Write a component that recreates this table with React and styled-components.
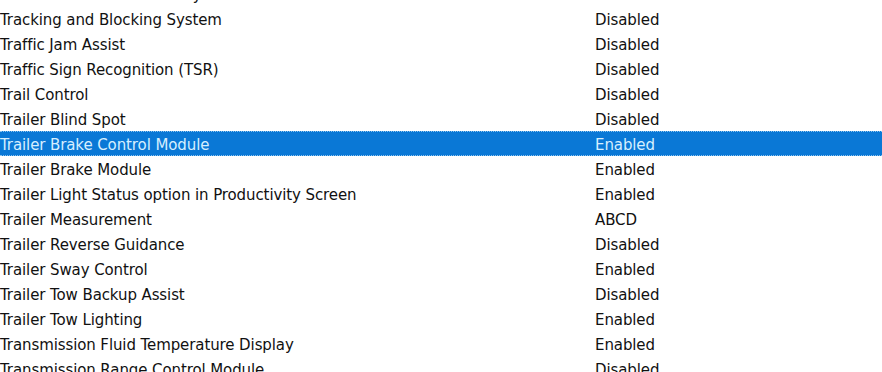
import React from 'react';
import styled, {createGlobalStyle} from 'styled-components';

const GlobalStyle = createGlobalStyle`
  html, body {
    margin: 0;
    padding: 0;
    background: #ffffff;
    overflow: hidden;
  }
`

const features = [
    {name: 'Trailer Hitch Assist Memory', value: 'Disabled'},
    {name: 'Tracking and Blocking System', value: 'Disabled'},
    {name: 'Traffic Jam Assist', value: 'Disabled'},
    {name: 'Traffic Sign Recognition (TSR)', value: 'Disabled'},
    {name: 'Trail Control', value: 'Disabled'},
    {name: 'Trailer Blind Spot', value: 'Disabled'},
    {name: 'Trailer Brake Control Module', value: 'Enabled', selected: true},
    {name: 'Trailer Brake Module', value: 'Enabled'},
    {name: 'Trailer Light Status option in Productivity Screen', value: 'Enabled'},
    {name: 'Trailer Measurement', value: 'ABCD'},
    {name: 'Trailer Reverse Guidance', value: 'Disabled'},
    {name: 'Trailer Sway Control', value: 'Enabled'},
    {name: 'Trailer Tow Backup Assist', value: 'Disabled'},
    {name: 'Trailer Tow Lighting', value: 'Enabled'},
    {name: 'Transmission Fluid Temperature Display', value: 'Enabled'},
    {name: 'Transmission Range Control Module', value: 'Disabled'},
]

const App = () => {
    return (
        <>
            <GlobalStyle/>
            <Viewport>
                <List>
                    {features.map((item, index) => (
                        <Row key={index} selected={item.selected}>
                            <Name>{item.name}</Name>
                            <Value>{item.value}</Value>
                        </Row>
                    ))}
                </List>
            </Viewport>
        </>
    )
}

const Viewport = styled.div`
  width: 882px;
  height: 372px;
  overflow: hidden;
`
const List = styled.div`
  margin-top: -19px;
  font-family: "DejaVu Sans", Tahoma, sans-serif;
  font-size: 15px;
  letter-spacing: -0.1px;
`
const Row = styled.div`
  box-sizing: border-box;
  display: grid;
  grid-template-columns: 595px 1fr;
  align-items: center;
  height: 25px;
  padding-top: 2px;
  color: #111111;
  ${props =>
    props.selected &&
    `
    background: #0a78d6;
    color: #d6efff;
    border-top: 1px dotted #8cc4f0;
    border-bottom: 1px dotted #8cc4f0;
  `};
`
const Name = styled.span`
  white-space: nowrap;
`
const Value = styled.span`
  white-space: nowrap;
`

export default App;
